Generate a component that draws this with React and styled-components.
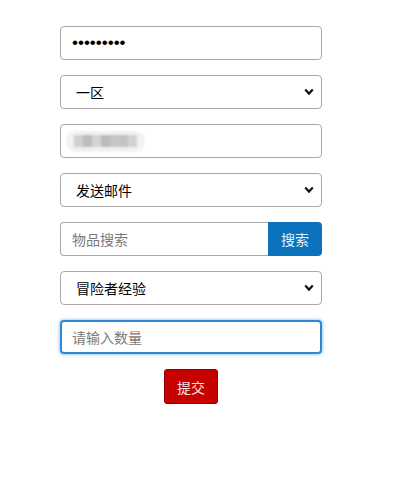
import React from 'react';
import styled, { createGlobalStyle, css } from 'styled-components';

const GlobalStyle = createGlobalStyle`
    html, body {
        margin: 0;
        padding: 0;
        background: #ffffff;
    }
    body {
        font-family: "Noto Sans CJK SC", "Noto Sans", sans-serif;
    }
`;

const Form = styled("form")`
    width: 262px;
    margin: 0 0 0 60px;
    padding-top: 26px;
    display: flex;
    flex-direction: column;
    gap: 15px;
`;

const fieldBase = css`
    box-sizing: border-box;
    width: 100%;
    height: 34px;
    border: 1.5px solid #a9a9a9;
    border-radius: 4px;
    background: #ffffff;
    font-family: "Noto Sans CJK SC", sans-serif;
    font-size: 14px;
    color: #111;
    outline: none;
`;

const TextInput = styled("input")`
    ${fieldBase}
    padding: 0 11px;
    &[type="password"] {
        font-family: "Liberation Sans", sans-serif;
        font-size: 17px;
        color: #000;
    }
    &::placeholder {
        color: #7a7a7a;
    }
    ${props => props.$focused && css`
        border: 2px solid #2f86d6;
        box-shadow: 0 0 3px 1px rgba(70, 150, 230, 0.45);
        padding: 0 10px;
    `}
`;

const SelectWrap = styled("div")`
    position: relative;
`;

const Select = styled("select")`
    ${fieldBase}
    appearance: none;
    padding: 0 30px 0 15px;
    color: #000;
`;

const Chevron = styled("svg")`
    position: absolute;
    right: 8px;
    top: 13px;
    width: 10px;
    height: 8px;
    pointer-events: none;
`;

const BlurBox = styled("div")`
    ${fieldBase}
    display: flex;
    align-items: center;
    padding: 0 5px;
`;

const Blurred = styled("div")`
    display: flex;
    align-items: center;
    height: 21px;
    padding: 0 8px;
    border-radius: 10px;
    background: #f1f1f1;
    filter: blur(1.1px);
`;

const Pixel = styled("span")`
    width: 9px;
    height: 12px;
    background: ${props => props.$c};
`;

const SearchRow = styled("div")`
    display: flex;
    height: 34px;
`;

const SearchInput = styled(TextInput)`
    flex: 1;
    border-right: none;
    border-radius: 4px 0 0 4px;
`;

const SearchButton = styled("button")`
    width: 54px;
    border: none;
    border-radius: 0 4px 4px 0;
    background: #0b72bd;
    color: #e8f2fb;
    font-family: "Noto Sans CJK SC", sans-serif;
    font-size: 14px;
    padding: 0;
`;

const SubmitRow = styled("div")`
    display: flex;
    justify-content: center;
`;

const SubmitButton = styled("button")`
    width: 54px;
    height: 35px;
    border: 1px solid #8c0000;
    border-radius: 3px;
    background: #c70000;
    color: #f7e3e3;
    font-family: "Noto Sans CJK SC", sans-serif;
    font-size: 14px;
    padding: 0;
`;

const Dropdown = ({ options }) => (
    <SelectWrap>
        <Select defaultValue={options[0]}>
            {options.map(o => <option key={o}>{o}</option>)}
        </Select>
        <Chevron viewBox="0 0 10 8">
            <path d="M1.2 1.6 L5 5.6 L8.8 1.6" fill="none" stroke="#111" strokeWidth="2.2" />
        </Chevron>
    </SelectWrap>
);

const pixels = ["#d0d0d0", "#bdbdbd", "#d4d4d0", "#b7bcc2", "#c6c6c6", "#bfc2c6", "#cfd2d4"];

const App = () => (
    <>
        <GlobalStyle />
        <Form onSubmit={e => e.preventDefault()}>
            <TextInput type="password" defaultValue="123456789" />
            <Dropdown options={["一区", "二区", "三区"]} />
            <BlurBox>
                <Blurred>
                    {pixels.map((c, i) => <Pixel key={i} $c={c} />)}
                </Blurred>
            </BlurBox>
            <Dropdown options={["发送邮件", "发送物品"]} />
            <SearchRow>
                <SearchInput placeholder="物品搜索" />
                <SearchButton type="button">搜索</SearchButton>
            </SearchRow>
            <Dropdown options={["冒险者经验", "金币"]} />
            <TextInput $focused placeholder="请输入数量" />
            <SubmitRow>
                <SubmitButton type="submit">提交</SubmitButton>
            </SubmitRow>
        </Form>
    </>
);

export default App;
